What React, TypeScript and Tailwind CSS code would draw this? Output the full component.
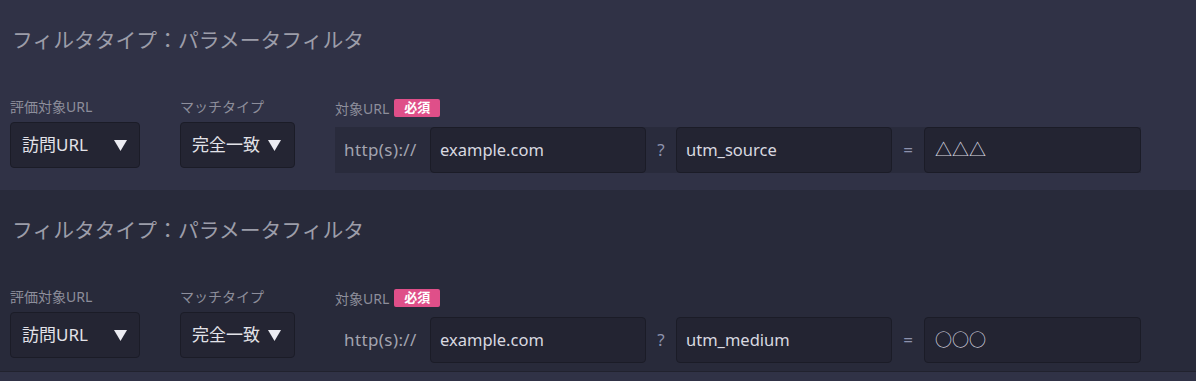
import React from "react";

interface FilterProps {
    paramName: string;
    paramValue: string;
    sectionClass: string;
    groupClass: string;
}

function Triangle() {
    return (
        <svg width="13" height="11" viewBox="0 0 13 11" className="shrink-0">
            <path d="M0 0 H13 L6.5 11 Z" fill="#ececf2" />
        </svg>
    );
}

function ParamFilter({ paramName, paramValue, sectionClass, groupClass }: FilterProps) {
    return (
        <div className={`pl-[10px] pt-[26px] ${sectionClass}`}>
            <div className="pl-[2px] text-[20.8px] leading-[28px] text-[#9c9da9]">フィルタタイプ：パラメータフィルタ</div>

            <div className="flex items-start mt-[43px]">
                <div className="w-[130px]">
                    <div className="text-[14px] leading-[20px] text-[#8d8e9b]">評価対象URL</div>
                    <div className="mt-[5px] h-[46px] flex items-center justify-between pl-[11px] pr-[12px] bg-[#242533] border border-[#1b1c27] rounded-[4px]">
                        <span className="text-[17px] text-[#e2e2e8]">訪問URL</span>
                        <Triangle />
                    </div>
                </div>

                <div className="w-[115px] ml-[40px]">
                    <div className="text-[14px] leading-[20px] text-[#8d8e9b]">マッチタイプ</div>
                    <div className="mt-[5px] h-[46px] flex items-center gap-[8px] pl-[11px] bg-[#242533] border border-[#1b1c27] rounded-[4px]">
                        <span className="text-[17px] text-[#e2e2e8]">完全一致</span>
                        <Triangle />
                    </div>
                </div>

                <div className="ml-[40px] mt-[2px]">
                    <div className="flex items-center h-[18px]">
                        <span className="text-[14px] text-[#8d8e9b]">対象URL</span>
                        <span className="ml-[5px] h-[18px] w-[46px] flex items-center justify-center rounded-[2px] bg-[#df4f89] text-[13px] font-bold text-white">必須</span>
                    </div>
                    <div className={`mt-[10px] flex h-[46px] ${groupClass}`}>
                        <div className="w-[95px] pl-[9px] flex items-center text-[17px] tracking-[0.4px] text-[#a3a4b0]">http(s)://</div>
                        <div className="w-[216px] flex items-center pl-[9px] bg-[#232432] border border-[#1b1c27] rounded-[4px] text-[16.5px] text-[#d9d9e0]">example.com</div>
                        <div className="w-[30px] flex items-center justify-center text-[17px] text-[#8d92ae]">?</div>
                        <div className="w-[216px] flex items-center pl-[9px] bg-[#232432] border border-[#1b1c27] rounded-[4px] text-[16.5px] text-[#d9d9e0]">{paramName}</div>
                        <div className="w-[32px] flex items-center justify-center text-[17px] text-[#8d92ae]">=</div>
                        <div className="w-[217px] flex items-center pl-[10px] bg-[#232432] border border-[#1b1c27] rounded-[4px] text-[17px] text-[#d9d9e0]">{paramValue}</div>
                    </div>
                </div>
            </div>
        </div>
    );
}

export default function App() {
    return (
        <div className="w-[1196px] h-[381px] overflow-hidden bg-[#303246]" style={{ fontFamily: '"Noto Sans", "Noto Sans CJK JP", sans-serif' }}>
            <ParamFilter
                paramName="utm_source"
                paramValue="△△△"
                sectionClass="h-[190px] bg-[#303246]"
                groupClass="bg-[#292b3c]"
            />
            <ParamFilter
                paramName="utm_medium"
                paramValue="○○○"
                sectionClass="h-[182px] bg-[#282a3a] border-b border-[#21222e]"
                groupClass="bg-[#282a3a]"
            />
        </div>
    );
}
